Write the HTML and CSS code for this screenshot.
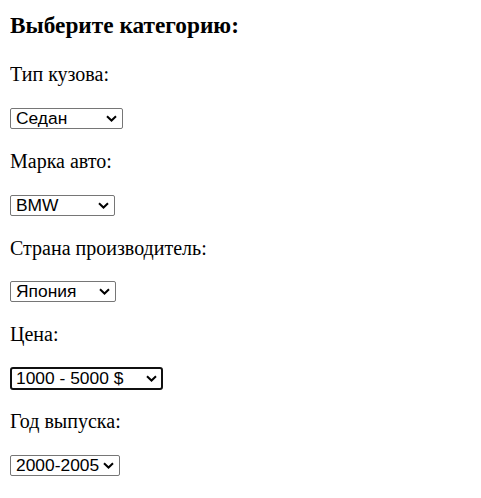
FILE: index.html
```html
<!DOCTYPE html>
<html>

<head>
    <meta charset="utf-8">
    <link rel="stylesheet" href="styles.css">
</head>

<body>
    <h3 class="title">Выберите категорию:</h3>
    <form class="filters">
        <label class="lbl" for="body">Тип кузова:</label>
        <span class="pick">
            <select id="body" class="sel sel-body">
                <option>Седан</option>
                <option>Хэтчбек</option>
                <option>Универсал</option>
            </select>
            <svg class="chev" width="11" height="7" viewBox="0 0 11 7"><path d="M1 1.2 L5.5 5.5 L10 1.2" fill="none" stroke="#000" stroke-width="2"/></svg>
        </span>

        <label class="lbl" for="brand">Марка авто:</label>
        <span class="pick">
            <select id="brand" class="sel sel-brand">
                <option>BMW</option>
                <option>Audi</option>
                <option>Toyota</option>
            </select>
            <svg class="chev" width="11" height="7" viewBox="0 0 11 7"><path d="M1 1.2 L5.5 5.5 L10 1.2" fill="none" stroke="#000" stroke-width="2"/></svg>
        </span>

        <label class="lbl" for="country">Страна производитель:</label>
        <span class="pick">
            <select id="country" class="sel sel-country">
                <option>Япония</option>
                <option>Германия</option>
                <option>США</option>
            </select>
            <svg class="chev" width="11" height="7" viewBox="0 0 11 7"><path d="M1 1.2 L5.5 5.5 L10 1.2" fill="none" stroke="#000" stroke-width="2"/></svg>
        </span>

        <label class="lbl" for="price">Цена:</label>
        <span class="pick">
            <select id="price" class="sel sel-price focused">
                <option>1000 - 5000 $</option>
                <option>5000 - 10000 $</option>
                <option>10000 - 20000 $</option>
            </select>
            <svg class="chev" width="11" height="7" viewBox="0 0 11 7"><path d="M1 1.2 L5.5 5.5 L10 1.2" fill="none" stroke="#000" stroke-width="2"/></svg>
        </span>

        <label class="lbl" for="year">Год выпуска:</label>
        <span class="pick">
            <select id="year" class="sel sel-year">
                <option>2000-2005</option>
                <option>2005-2010</option>
                <option>2010-2015</option>
            </select>
            <svg class="chev" width="11" height="7" viewBox="0 0 11 7"><path d="M1 1.2 L5.5 5.5 L10 1.2" fill="none" stroke="#000" stroke-width="2"/></svg>
        </span>
    </form>
</body>

</html>
```

FILE: styles.css
```css
body {
    font-family: "Liberation Serif", "Times New Roman", serif;
    background-color: #fff;
    color: #000;
    margin: 0 10px;
}

.title {
    font-size: 23.3px;
    line-height: 26px;
    margin: 12px 0 25px;
}

.filters {
    display: flex;
    flex-direction: column;
    align-items: flex-start;
    gap: 20.9px;
}

.lbl {
    font-size: 20px;
    line-height: 23px;
}

.pick {
    position: relative;
    display: block;
    height: 21px;
    margin-top: 1px;
}

.sel {
    -webkit-appearance: none;
    appearance: none;
    display: block;
    box-sizing: border-box;
    font-family: "Liberation Sans", Arial, sans-serif;
    font-size: 17.4px;
    line-height: 19px;
    height: 21px;
    color: #000;
    background-color: #fff;
    border: 1px solid #767676;
    border-radius: 2px;
    padding: 0 0 0 5px;
    margin: 0;
}

.chev {
    position: absolute;
    right: 6px;
    top: 7px;
    pointer-events: none;
}

.sel-body { width: 113px; }
.sel-brand { width: 105px; }
.sel-country { width: 106px; }
.sel-price { width: 153px; }
.sel-year { width: 110px; }

/* price select shows the focus ring like in the shot */
.focused {
    border: 2px solid #101010;
    border-radius: 3px;
    padding-left: 4px;
    height: 23px;
    margin-top: -1px;
}
```
